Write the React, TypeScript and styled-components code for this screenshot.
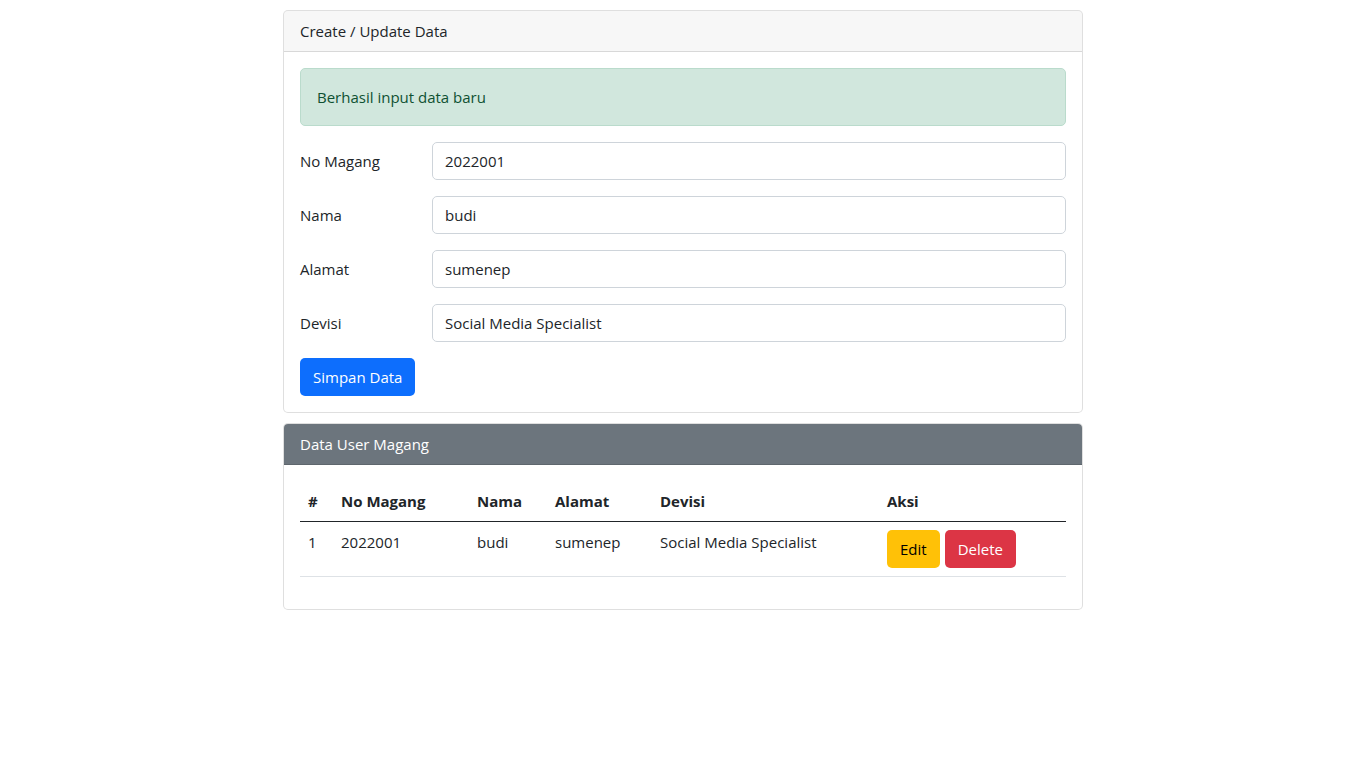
import React from "react";
import styled, { createGlobalStyle } from "styled-components";

const Global = createGlobalStyle`
  *, *::before, *::after { box-sizing: border-box; }
  body {
    margin: 0;
    font-family: "Open Sans", "Noto Sans", sans-serif;
    font-size: 15px;
    line-height: 24px;
    color: #212529;
    background: #fff;
  }
`;

const Container = styled.div`
  width: 800px;
  margin: 10px auto 0;
  display: flex;
  flex-direction: column;
  gap: 10px;
`;

const Card = styled.div`
  border: 1px solid rgba(0, 0, 0, 0.125);
  border-radius: 5px;
  overflow: hidden;
  background: #fff;
`;

const CardHeader = styled.div<{ $dark?: boolean }>`
  padding: 8px 16px;
  border-bottom: 1px solid rgba(0, 0, 0, 0.125);
  background: ${(p) => (p.$dark ? "#6c757d" : "rgba(0,0,0,0.03)")};
  color: ${(p) => (p.$dark ? "#fff" : "#212529")};
`;

const CardBody = styled.div`
  padding: 16px;
  display: flex;
  flex-direction: column;
  gap: 16px;
`;

const Alert = styled.div`
  padding: 16px;
  background: #d1e7dd;
  border: 1px solid #badbcc;
  color: #0f5132;
  border-radius: 5px;
`;

const FormRow = styled.div`
  display: grid;
  grid-template-columns: 132px 1fr;
  align-items: start;
`;

const Label = styled.label`
  padding-top: 7px;
  padding-bottom: 7px;
`;

const Input = styled.input`
  display: block;
  width: 100%;
  height: 38px;
  padding: 6px 12px;
  font: inherit;
  color: #212529;
  border: 1px solid #ced4da;
  border-radius: 5px;
  outline: none;
`;

const Button = styled.button<{ $variant: "primary" | "warning" | "danger" }>`
  display: inline-block;
  height: 38px;
  padding: 6px 12px;
  font: inherit;
  border-radius: 5px;
  border: 1px solid transparent;
  cursor: pointer;
  background: ${(p) =>
    p.$variant === "primary" ? "#0d6efd" : p.$variant === "warning" ? "#ffc107" : "#dc3545"};
  color: ${(p) => (p.$variant === "warning" ? "#000" : "#fff")};
`;

const SaveRow = styled.div`
  display: flex;
`;

const Table = styled.table`
  width: 100%;
  border-collapse: collapse;
  margin-bottom: 16px;
  vertical-align: top;
  table-layout: fixed;
`;

const Th = styled.th<{ $w: number }>`
  width: ${(p) => p.$w}px;
  text-align: left;
  font-weight: 700;
  padding: 8px;
  border-bottom: 1px solid #212529;
`;

const Td = styled.td`
  padding: 8px;
  vertical-align: top;
  border-bottom: 1px solid #dee2e6;
`;

const Actions = styled.div`
  display: flex;
  gap: 5px;
`;

const fields = [
  { label: "No Magang", value: "2022001" },
  { label: "Nama", value: "budi" },
  { label: "Alamat", value: "sumenep" },
  { label: "Devisi", value: "Social Media Specialist" },
];

const cols = [
  { t: "#", w: 33 },
  { t: "No Magang", w: 136 },
  { t: "Nama", w: 78 },
  { t: "Alamat", w: 105 },
  { t: "Devisi", w: 227 },
  { t: "Aksi", w: 187 },
];

export default function App() {
  return (
    <>
      <Global />
      <Container>
        <Card>
          <CardHeader>Create / Update Data</CardHeader>
          <CardBody>
            <Alert>Berhasil input data baru</Alert>
            {fields.map((f) => (
              <FormRow key={f.label}>
                <Label>{f.label}</Label>
                <Input defaultValue={f.value} />
              </FormRow>
            ))}
            <SaveRow>
              <Button $variant="primary">Simpan Data</Button>
            </SaveRow>
          </CardBody>
        </Card>
        <Card>
          <CardHeader $dark>Data User Magang</CardHeader>
          <CardBody>
            <Table>
              <thead>
                <tr>
                  {cols.map((c) => (
                    <Th key={c.t} $w={c.w}>
                      {c.t}
                    </Th>
                  ))}
                </tr>
              </thead>
              <tbody>
                <tr>
                  <Td>1</Td>
                  <Td>2022001</Td>
                  <Td>budi</Td>
                  <Td>sumenep</Td>
                  <Td>Social Media Specialist</Td>
                  <Td>
                    <Actions>
                      <Button $variant="warning">Edit</Button>
                      <Button $variant="danger">Delete</Button>
                    </Actions>
                  </Td>
                </tr>
              </tbody>
            </Table>
          </CardBody>
        </Card>
      </Container>
    </>
  );
}
